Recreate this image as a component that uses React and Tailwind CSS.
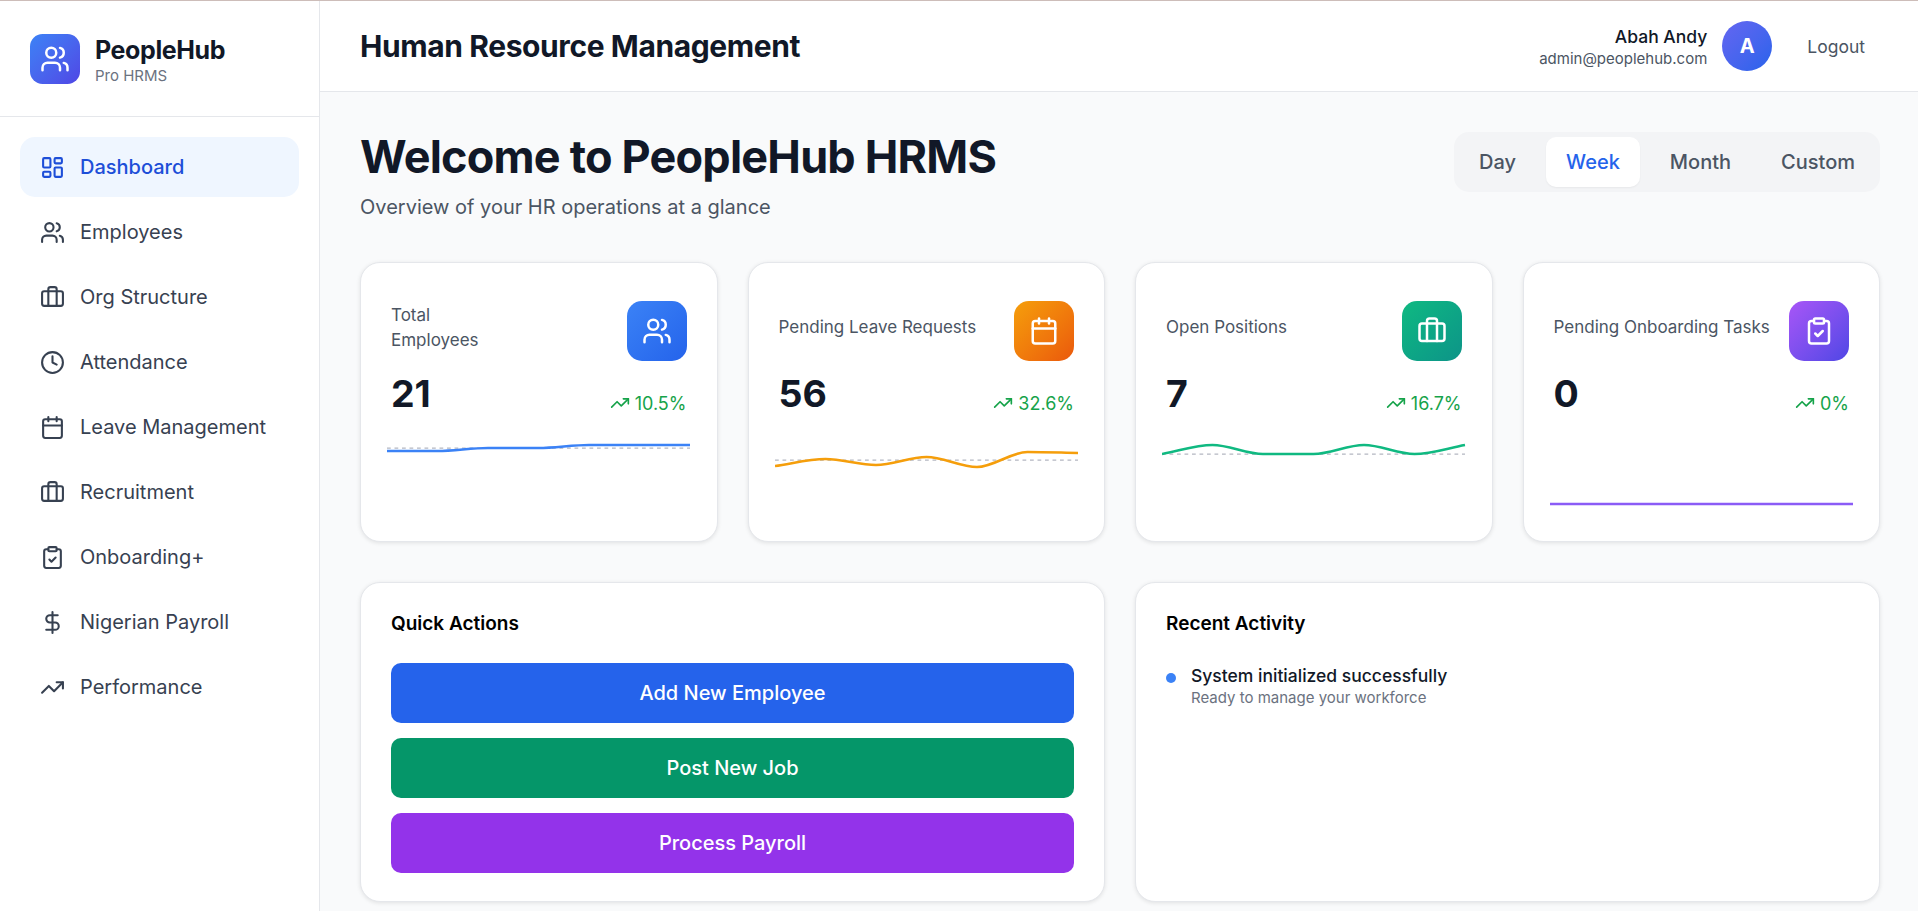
import {
  Briefcase,
  Calendar,
  ClipboardCheck,
  Clock,
  DollarSign,
  LayoutDashboard,
  TrendingUp,
  Users,
} from "lucide-react";

const navItems = [
  { label: "Dashboard", icon: LayoutDashboard, active: true },
  { label: "Employees", icon: Users },
  { label: "Org Structure", icon: Briefcase },
  { label: "Attendance", icon: Clock },
  { label: "Leave Management", icon: Calendar },
  { label: "Recruitment", icon: Briefcase },
  { label: "Onboarding+", icon: ClipboardCheck },
  { label: "Nigerian Payroll", icon: DollarSign },
  { label: "Performance", icon: TrendingUp },
];

const stats = [
  {
    label: "Total Employees",
    value: "21",
    change: "10.5%",
    icon: Users,
    gradient: "from-[#3b82f6] to-[#2563eb]",
    color: "#3b82f6",
    points: [26, 26, 23, 23, 20, 20, 20],
    dash: 23,
    labelWidth: "w-[100px]",
  },
  {
    label: "Pending Leave Requests",
    value: "56",
    change: "32.6%",
    icon: Calendar,
    gradient: "from-[#f59e0b] to-[#ea580c]",
    color: "#f59e0b",
    points: [41, 34, 40, 32, 42, 27, 28],
    dash: 35,
  },
  {
    label: "Open Positions",
    value: "7",
    change: "16.7%",
    icon: Briefcase,
    gradient: "from-[#10b981] to-[#0d9488]",
    color: "#10b981",
    points: [29, 20, 29, 29, 20, 29, 20],
    dash: 29,
  },
  {
    label: "Pending Onboarding Tasks",
    value: "0",
    change: "0%",
    icon: ClipboardCheck,
    gradient: "from-[#a855f7] to-[#4f46e5]",
    color: "#8b5cf6",
    points: [79, 79, 79, 79, 79, 79, 79],
  },
];

const actions = [
  { label: "Add New Employee", color: "bg-[#2563eb]" },
  { label: "Post New Job", color: "bg-[#059669]" },
  { label: "Process Payroll", color: "bg-[#9333ea]" },
];

const CHART_WIDTH = 303;

// monotone-x curve, same maths the chart lib uses
function linePath(points) {
  const step = CHART_WIDTH / (points.length - 1);
  const slopes = points.slice(1).map((y, i) => (y - points[i]) / step);
  const tangents = points.map((_, i) => {
    if (i === 0) return slopes[0];
    if (i === points.length - 1) return slopes[i - 1];
    const a = slopes[i - 1];
    const b = slopes[i];
    if (a * b <= 0) return 0;
    return (Math.sign(a) + Math.sign(b)) * Math.min(Math.abs(a), Math.abs(b), Math.abs(a + b) / 4);
  });
  let d = `M0 ${points[0]}`;
  for (let i = 1; i < points.length; i++) {
    const x0 = (i - 1) * step;
    const x1 = i * step;
    d += ` C${x0 + step / 3} ${points[i - 1] + (tangents[i - 1] * step) / 3} ${x1 - step / 3} ${points[i] - (tangents[i] * step) / 3} ${x1} ${points[i]}`;
  }
  return d;
}

const Sparkline = ({ points, dash, color }) => (
  <svg className="mt-[7px] block h-[100px] w-full">
    {dash !== undefined && (
      <line x1="0" x2={CHART_WIDTH} y1={dash} y2={dash} stroke="#b4b7c1" strokeWidth="1.25" strokeDasharray="3.75 3.75" />
    )}
    <path d={linePath(points)} fill="none" stroke={color} strokeWidth="2.5" />
  </svg>
);

const StatCard = ({ stat }) => {
  const Icon = stat.icon;
  return (
    <div className="h-[280px] rounded-[20px] border border-[#e5e7eb] bg-white px-[26px] pt-[38px] shadow-[0_1px_4px_rgba(0,0,0,0.1)]">
      <div className="flex h-[60px] items-center justify-between px-[4px]">
        <p className={`mb-[7px] text-[17px] leading-[25px] text-[#4b5563] ${stat.labelWidth || ""}`}>{stat.label}</p>
        <div className={`flex h-[60px] w-[60px] shrink-0 items-center justify-center rounded-[15px] bg-linear-to-br ${stat.gradient}`}>
          <Icon size={30} className="text-white" strokeWidth={2} />
        </div>
      </div>
      <div className="mt-[7px] flex h-[50px] items-center justify-between px-[4px]">
        <span className="mt-[2px] text-[37.5px] leading-[50px] font-bold text-[#111827]">{stat.value}</span>
        <span className="mt-[20px] flex items-center gap-[5px] text-[18px] leading-[25px] text-[#16a34a]">
          <TrendingUp size={20} />
          {stat.change}
        </span>
      </div>
      <Sparkline points={stat.points} dash={stat.dash} color={stat.color} />
    </div>
  );
};

const App = () => {
  return (
    <div className="flex h-[911px] flex-col overflow-hidden bg-[#f9fafb] font-[family-name:Inter,sans-serif]">
      <div className="h-px shrink-0 bg-[#cdbdb9]" />
      <div className="flex min-h-0 flex-1">
        <aside className="w-[320px] shrink-0 border-r border-[#e5e7eb] bg-white">
          <div className="flex items-center gap-[15px] border-b border-[#e5e7eb] pt-[31px] pr-[30px] pb-[30px] pl-[30px]">
            <div className="flex h-[50px] w-[50px] items-center justify-center rounded-[12.5px] bg-linear-to-br from-[#3b82f6] to-[#4f46e5]">
              <Users size={30} className="text-white" />
            </div>
            <div className="mt-[2px]">
              <div className="text-[25px] leading-[32px] font-bold tracking-[-0.4px] text-[#111827]">PeopleHub</div>
              <div className="text-[15px] leading-[20px] text-[#6b7280]">Pro HRMS</div>
            </div>
          </div>
          <nav className="flex flex-col gap-[5px] px-[20px] pt-[20px]">
            {navItems.map((item) => {
              const Icon = item.icon;
              return (
                <div
                  key={item.label}
                  className={`flex h-[60px] items-center gap-[15px] rounded-[15px] px-[20px] text-[20px] ${
                    item.active ? "bg-[#eff6ff] font-medium text-[#1d4ed8]" : "text-[#374151]"
                  }`}
                >
                  <Icon size={25} />
                  {item.label}
                </div>
              );
            })}
          </nav>
        </aside>

        <div className="min-w-0 flex-1">
          <header className="flex h-[91px] items-center justify-between border-b border-[#e5e7eb] bg-white pr-[40px] pl-[40px]">
            <h1 className="text-[30px] font-bold tracking-[-0.4px] text-[#111827]">Human Resource Management</h1>
            <div className="flex items-center">
              <div className="text-right">
                <div className="text-[17.5px] leading-[25px] font-medium text-[#111827]">Abah Andy</div>
                <div className="text-[15px] leading-[20px] text-[#4b5563]">admin@peoplehub.com</div>
              </div>
              <div className="ml-[15px] flex h-[50px] w-[50px] items-center justify-center rounded-full bg-linear-to-br from-[#6366f1] to-[#2563eb] text-[20px] font-bold text-white">
                A
              </div>
              <button className="ml-[22px] px-[13px] pt-[2px] text-[17.5px] text-[#4b5563]">Logout</button>
            </div>
          </header>

          <main className="pt-[40px] pr-[38px] pl-[40px]">
            <div className="flex items-start justify-between">
              <div>
                <h2 className="text-[45px] leading-[50px] font-bold tracking-[-0.8px] text-[#111827]">Welcome to PeopleHub HRMS</h2>
                <p className="mt-[10px] text-[20px] leading-[30px] text-[#4b5563]">
                  Overview of your HR operations at a glance
                </p>
              </div>
              <div className="flex gap-[10px] rounded-[15px] bg-[#f3f4f6] p-[5px]">
                {["Day", "Week", "Month", "Custom"].map((range) => (
                  <button
                    key={range}
                    className={`h-[50px] rounded-[10px] px-[20px] text-[20px] font-medium ${
                      range === "Week" ? "bg-white text-[#2563eb] shadow-[0_1px_2px_rgba(0,0,0,0.05)]" : "text-[#4b5563]"
                    }`}
                  >
                    {range}
                  </button>
                ))}
              </div>
            </div>

            <div className="mt-[40px] grid grid-cols-4 gap-[30px]">
              {stats.map((stat) => (
                <StatCard key={stat.label} stat={stat} />
              ))}
            </div>

            <div className="mt-[40px] grid grid-cols-2 gap-[30px]">
              <div className="h-[320px] rounded-[20px] border border-[#e5e7eb] bg-white p-[30px] shadow-[0_1px_4px_rgba(0,0,0,0.1)]">
                <h3 className="mb-[29px] text-[19px] leading-[21px] font-semibold text-black">Quick Actions</h3>
                <div className="flex flex-col gap-[15px]">
                  {actions.map((action) => (
                    <button
                      key={action.label}
                      className={`h-[60px] rounded-[10px] text-[20px] font-medium text-white ${action.color}`}
                    >
                      {action.label}
                    </button>
                  ))}
                </div>
              </div>
              <div className="h-[320px] rounded-[20px] border border-[#e5e7eb] bg-white p-[30px] shadow-[0_1px_4px_rgba(0,0,0,0.1)]">
                <h3 className="mb-[29px] text-[19px] leading-[21px] font-semibold text-black">Recent Activity</h3>
                <div className="flex items-start gap-[15px]">
                  <span className="mt-[10px] h-[10px] w-[10px] shrink-0 rounded-full bg-[#3b82f6]" />
                  <div>
                    <p className="text-[17.5px] leading-[25px] font-medium text-[#111827]">System initialized successfully</p>
                    <p className="text-[15px] leading-[20px] text-[#6b7280]">Ready to manage your workforce</p>
                  </div>
                </div>
              </div>
            </div>
          </main>
        </div>
      </div>
    </div>
  );
};

export default App;
